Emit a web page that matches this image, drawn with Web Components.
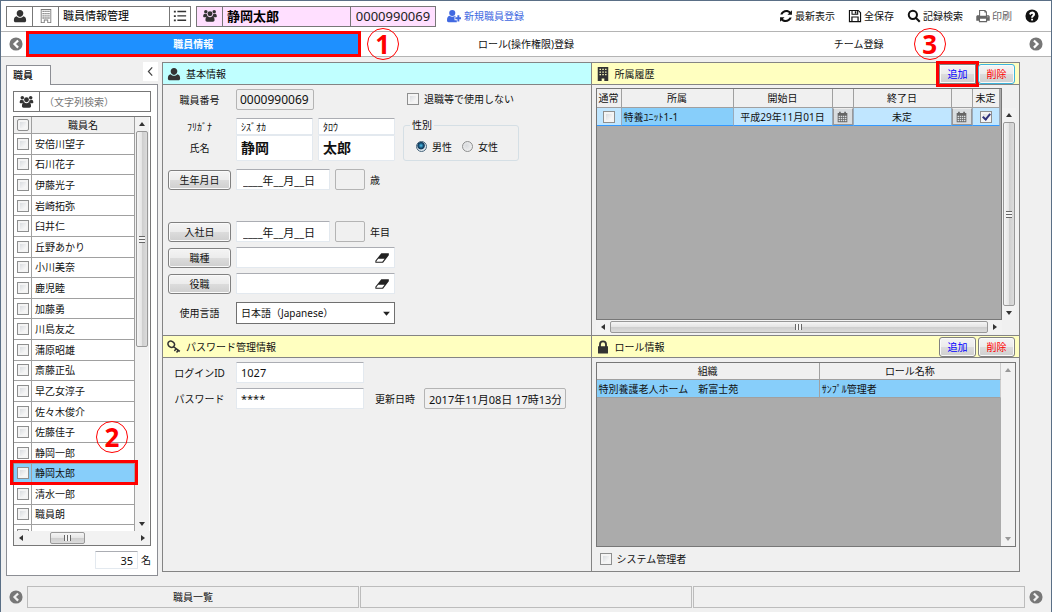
<!DOCTYPE html>
<html lang="ja">
<head>
<meta charset="utf-8">
<title>職員情報管理</title>
<style>
html,body{margin:0;height:100%}
body{font:10px/16px "Noto Sans","Noto Sans CJK JP",sans-serif;color:#111;background:#f0f0f0}
</style>
</head>
<body>
<staff-app></staff-app>
<script>
const BASE = `
*{box-sizing:border-box}
button,input,select{font:inherit;color:inherit;margin:0}
button{cursor:pointer;padding:0}
.btn{height:20px;border:1px solid #808080;border-radius:3px;background:linear-gradient(#f4f4f4,#ececec 48%,#dcdcdc 52%,#cfcfcf);box-shadow:inset 0 0 0 1px #fafafa;line-height:16px;white-space:nowrap}
.field{height:21px;border:1px solid #e3e9ef;border-top-color:#abadb3;background:#fff;padding:0 4px;min-width:0;border-radius:1px;font-size:11px}
.field[readonly].flat{background:#f0f0f0;border:1px solid #b4b4b4;border-radius:2px}
input[type=checkbox]{appearance:none;width:12px;height:12px;flex:none;border:1px solid #8e8f8f;background:linear-gradient(135deg,#cfd3d8,#f6f6f6 70%);box-shadow:inset 0 0 0 2px #f4f4f4;display:inline-block;vertical-align:middle;position:relative}
input[type=checkbox]:checked::after{content:"";position:absolute;left:3px;top:0;width:3px;height:6px;border:solid #31347c;border-width:0 2px 2px 0;transform:rotate(40deg)}
input[type=radio]{appearance:none;width:11px;height:11px;flex:none;border:1px solid #8e8f8f;border-radius:50%;background:radial-gradient(circle at 40% 40%,#d8dadd,#f6f6f6)}
input[type=radio]:checked{border-color:#45637a;background:radial-gradient(circle at 45% 40%,#4fc3ee 0,#12486e 35%,#12395a 45%,#dfe8ee 58%)}
table{border-spacing:0;table-layout:fixed;width:100%}
th,td{padding:0;font-weight:400;overflow:hidden;white-space:nowrap;border-right:1px solid #a0a0a0;border-bottom:1px solid #a0a0a0}
th{background:#f0f0f0;text-align:center}
`;
function define(name, css, html, setup){
  const t = document.createElement('template');
  t.innerHTML = `<style>${BASE}${css}</style>${html}`;
  customElements.define(name, class extends HTMLElement{
    constructor(){
      super();
      this.attachShadow({mode:'open'}).append(t.content.cloneNode(true));
    }
    connectedCallback(){ if(setup) setup(this, this.shadowRoot); }
  });
}

const ICONS = {
  user:'<path d="M8 1c2.300 0 3.800 1.700 3.800 3.900S10.300 9 8 9 4.200 7.200 4.200 4.900 5.700 1 8 1zM4.300 8.300C5.300 9.500 6.600 10 8 10s2.700-.5 3.700-1.700c2.300.4 3.300 2.200 3.300 4.700 0 1.300-.8 2-2 2H3c-1.200 0-2-.7-2-2 0-2.500 1-4.300 3.300-4.700z"/>',
  users:'<circle cx="3.200" cy="3.200" r="2"/><circle cx="12.800" cy="3.200" r="2"/><circle cx="8" cy="5.400" r="2.800"/><path d="M.2 8.700c0-2 .6-3.300 2-3.300.7.500 1.400.6 2.200.4.100 1.100.4 1.900 1 2.500-.9.100-1.600.5-2 1.200H1c-.5 0-.8-.3-.8-.8zM15.800 8.700c0-2-.6-3.300-2-3.300-.7.500-1.400.6-2.200.4-.1 1.100-.4 1.900-1 2.500.9.100 1.600.5 2 1.200H15c.5 0 .8-.3.8-.8zM5.500 8.300C7 9.700 9 9.700 10.500 8.300c1.800.2 2.700 1.900 2.700 4.300 0 1.200-.7 1.900-1.800 1.900H4.600c-1.100 0-1.800-.7-1.800-1.900 0-2.400.9-4.100 2.700-4.300z"/>',
  building:'<path fill-rule="evenodd" d="M2 0h12v16H9.500v-3h-3v3H2zM3 1v14h2.500v-3h5v3H13V1z"/><path d="M4 2h1.500v1.500H4zM6.200 2h1.500v1.500H6.200zM8.400 2h1.500v1.500H8.400zM10.600 2h1.500v1.500h-1.500zM4 4.500h1.500V6H4zM6.200 4.500h1.500V6H6.200zM8.400 4.500h1.500V6H8.400zM10.600 4.500h1.500V6h-1.500zM4 7h1.500v1.500H4zM6.200 7h1.500v1.500H6.200zM8.400 7h1.500v1.500H8.400zM10.600 7h1.500v1.500h-1.500zM4 9.500h1.500V11H4zM6.200 9.500h1.500V11H6.200zM8.400 9.500h1.500V11H8.400zM10.600 9.500h1.500V11h-1.500z"/>',
  tower:'<path fill-rule="evenodd" d="M2 0h12v16H9.500v-3h-3v3H2zM4 2v1.500h1.700V2zM7.200 2v1.500h1.700V2zM10.400 2v1.500H12V2zM4 5v1.500h1.700V5zM7.200 5v1.500h1.700V5zM10.400 5v1.500H12V5zM4 8v1.500h1.700V8zM7.200 8v1.500h1.700V8zM10.400 8v1.500H12V8z"/>',
  list:'<path d="M1 2h2.200v2H1zM5 2h10v1.700H5zM1 7h2.200v2H1zM5 7h10v1.700H5zM1 12h2.200v2H1zM5 12h10v1.700H5z"/>',
  adduser:'<circle cx="6" cy="4.500" r="3.500"/><path d="M3 7.800c2 1.500 4 1.500 6 0 .5 0 1 .3 1.400.7H8.600v4.300h2.600V15H1.800C.7 15 0 14.300 0 13.100 0 10.200.8 8 3 7.800z"/><path d="M11.900 7h2.200v2.500H16v2.200h-1.900V14.200h-2.200v-2.500H9.500V9.500h2.400z"/>',
  refresh:'<path d="M14.800 1.500v5H9.700l1.900-1.900C9 2.200 5.200 3.400 4 6.200H1.500C3 1.200 9.400-.6 13.200 3zM1.200 14.500v-5h5.100l-1.900 1.900c2.600 2.400 6.400 1.200 7.600-1.600h2.500C13 14.800 6.600 16.600 2.800 13z"/>',
  save:'<path fill-rule="evenodd" d="M1 1h11l3 3v11H1zM2.300 2.300v11.400h1.500V8.500h8.400v5.200h1.500V4.600l-2-2.300v4.200H4V2.300zM5.200 2.300v3h5.200v-3zM5.200 9.800v3.900h5.600V9.800zM7.800 2.600h1.700V5H7.800z"/>',
  search:'<circle cx="6.700" cy="6.700" r="4.700" fill="none" stroke="currentColor" stroke-width="2.300"/><path d="M9.400 11l1.700-1.700 4.300 4.400-1.700 1.700z"/>',
  print:'<path fill-rule="evenodd" d="M3.500 1h7l2 2v4H14c1 0 1.700.7 1.700 1.700v4.600h-3V15H3.300v-1.700h-3V8.700C.3 7.700 1 7 2 7h1.500zM4.700 2.200v5.600h6.600V4H9.600V2.200zM4.600 11.200v2.600h6.800v-2.600zM13 8.500v1h1v-1z"/>',
  help:'<path fill-rule="evenodd" d="M8 .5a7.500 7.500 0 110 15 7.500 7.500 0 010-15zM7 11v2h2.200v-2zM4.700 5.600l1.700 1.200C7.300 5 9 5.200 9 6.300c0 1-2.100 1.300-2 3.700h2.100c.1-1.500 2.400-1.700 2.400-4C11.500 2.300 6.400 1.700 4.700 5.600z"/>',
  left:'<path fill-rule="evenodd" d="M8 .5a7.500 7.500 0 110 15 7.500 7.500 0 010-15zM9.500 3L4.500 8l5 5 1.800-1.800L8 8l3.300-3.200z"/>',
  right:'<path fill-rule="evenodd" d="M8 .5a7.500 7.500 0 110 15 7.500 7.500 0 010-15zM6.500 3L4.700 4.800 8 8l-3.300 3.200L6.500 13l5-5z"/>',
  key:'<ellipse cx="4.800" cy="4.800" rx="3.900" ry="3.300" transform="rotate(35 4.800 4.800)" fill="none" stroke="currentColor" stroke-width="1.700"/><path d="M7.300 6.600l7.900 5.800-1.300 1.500-1-.8-1.300 1.700-1.400-1 1.300-1.800-1-.8-1.400 1.800-1.300-1 1.500-1.900-3-2.200z"/>',
  lock:'<path fill-rule="evenodd" d="M3.500 7V5a4.500 4.500 0 019 0v2h1.200v8.500H2.300V7zM5.600 7h4.800V5a2.400 2.400 0 00-4.800 0z"/>',
  cal:'<path fill-rule="evenodd" d="M1 2h2V.5h2.500V2h5V.500H13V2h2v13.500H1zM2.300 6v2H4.500V6zM5.500 6v2h2V6zM8.500 6v2h2V6zM11.500 6v2h2.200V6zM2.300 9v2H4.500V9zM5.500 9v2h2V9zM8.500 9v2h2V9zM11.500 9v2h2.200V9zM2.300 12v2H4.500v-2zM5.500 12v2h2v-2zM8.500 12v2h2v-2zM11.500 12v2h2.200v-2z"/>',
  eraser:'<path fill-rule="evenodd" d="M7.200 2.500h8.600v2.300l-6.600 8.700H.4v-2.400zM2.100 10.900l-.7 1.500h6.900l2.700-3.600H3.700z"/>',
  back:'<path d="M10.500 2L5 8l5.500 6" fill="none" stroke="currentColor" stroke-width="1.800"/>',
  down:'<path d="M2 5h12l-6 7z"/>'
};
define('ui-icon', `:host{display:inline-block;width:14px;height:14px;flex:none}svg{display:block;width:100%;height:100%}`,
  `<svg viewBox="0 0 16 16" fill="currentColor" aria-hidden="true"></svg>`,
  (h,r)=>{ r.querySelector('svg').innerHTML = ICONS[h.getAttribute('name')] || ''; });

define('step-mark', `:host{position:absolute;z-index:3;display:grid;place-items:center;width:32px;height:32px;border:1px solid red;border-radius:50%;color:red;font:700 26px/30px "Noto Sans",sans-serif}`, `<slot></slot>`);

define('scroll-bar', `
:host{display:flex;flex-direction:column;align-items:center;background:#f2f2f2;width:14px;color:#333}
:host([horizontal]){flex-direction:row;width:auto;height:14px}
:host([off]){color:#999}
.cap{width:14px;height:14px;flex:none;display:grid;place-items:center}
.cap::before{content:"";border:3px solid transparent;border-top-width:0;border-bottom:4px solid currentColor}
.end::before{transform:rotate(180deg)}
:host([horizontal]) .start::before{transform:rotate(-90deg)}
:host([horizontal]) .end::before{transform:rotate(90deg)}
.track{flex:1;align-self:stretch;display:flex;flex-direction:inherit;min-height:0}
.thumb{flex:0 0 var(--thumb,100%);margin:0 1px;border:1px solid #989898;border-radius:2px;background:linear-gradient(90deg,#f5f5f5,#e6e6e6 45%,#cfcfcf 55%,#dcdcdc);display:grid;place-items:center}
:host([horizontal]) .thumb{margin:1px 0 1px var(--start,0px);background:linear-gradient(#f5f5f5,#e6e6e6 45%,#cfcfcf 55%,#dcdcdc)}
.thumb::before{content:"";width:6px;height:7px;background:repeating-linear-gradient(#666 0 1px,#f5f5f5 1px 3px)}
:host([horizontal]) .thumb::before{width:7px;height:6px;background:repeating-linear-gradient(90deg,#666 0 1px,#f5f5f5 1px 3px)}
:host([off]) .thumb{display:none}
`, `<div class="cap start"></div><div class="track"><div class="thumb"></div></div><div class="cap end"></div>`);

define('top-bar', `
:host{display:flex;align-items:center;height:30px;padding:0 12px 0 5px;background:#fff;white-space:nowrap}
.group{display:flex;height:21px;border:1px solid #777;margin-right:5px}
.group>*{display:flex;align-items:center;justify-content:center;border:0;border-right:1px solid #777;background:none;color:#333}
.group>:last-child{border-right:0}
.sq{width:26px}.list{width:20px}
.title{width:111px;font-size:11px;justify-content:flex-start;padding-left:4px;color:#000}
.pink{background:#ffdfff}
.name{width:128px;font-size:13px;font-weight:700;justify-content:flex-start;padding-left:4px;color:#000}
.num{width:84px;font-size:13px;color:#222}
a{display:flex;align-items:center;color:#111;text-decoration:none;gap:2px;margin-left:13px}
a.new{color:#4169e1;margin-left:5px}
a.dim{color:#666}
.space{flex:1}
`, `
<div class="group"><button class="sq" aria-label="利用者"><ui-icon name="user"></ui-icon></button><button class="sq" aria-label="施設" style="color:#777"><ui-icon name="building"></ui-icon></button><span class="title">職員情報管理</span><button class="list" aria-label="一覧"><ui-icon name="list"></ui-icon></button></div>
<div class="group pink"><button class="sq" aria-label="職員"><ui-icon name="users"></ui-icon></button><span class="name">静岡太郎</span><span class="num">0000990069</span></div>
<a class="new" href="#new"><ui-icon name="adduser" style="width:16px"></ui-icon>新規職員登録</a>
<span class="space"></span>
<a href="#reload"><ui-icon name="refresh"></ui-icon>最新表示</a>
<a href="#save"><ui-icon name="save"></ui-icon>全保存</a>
<a href="#search"><ui-icon name="search"></ui-icon>記録検索</a>
<a href="#print" class="dim"><ui-icon name="print"></ui-icon>印刷</a>
<a href="#help" aria-label="ヘルプ"><ui-icon name="help"></ui-icon></a>
`);

const ARROWS = `
.arrow{width:26px;border:0;background:none;display:grid;place-items:center end;padding-right:4px;color:#777;flex:none}
.arrow:last-child{place-items:center start;padding:0 0 0 4px}
nav{flex:1;display:grid;grid-template-columns:repeat(3,1fr)}
`;
define('tab-strip', ARROWS + `
:host{display:flex;align-items:stretch;height:26px;border:solid #b4b4b4;border-width:1px 0;background:#fff}
.tab{position:relative;border:0;background:none}
.on{background:#1e90ff;color:#fff;font-weight:700;outline:3px solid red;outline-offset:-2px}
.one{left:calc(100% + 7px);top:-4px}
.three{left:calc(50% + 55px);top:-4px}
`, `<button class="arrow" aria-label="前へ"><ui-icon name="left"></ui-icon></button>
<nav><button class="tab on">職員情報<step-mark class="one">1</step-mark></button><button class="tab">ロール(操作権限)登録</button><button class="tab">チーム登録<step-mark class="three">3</step-mark></button></nav>
<button class="arrow" aria-label="次へ"><ui-icon name="right"></ui-icon></button>`);

define('foot-strip', ARROWS + `
:host{display:flex;align-items:stretch;height:22px;margin-bottom:5px}
nav{gap:1px}
nav button{border:1px solid #bcbcbc;background:#f0f0f0}
`, `<button class="arrow" aria-label="前へ"><ui-icon name="left"></ui-icon></button>
<nav><button>職員一覧</button><button aria-label="空き"></button><button aria-label="空き"></button></nav>
<button class="arrow" aria-label="次へ"><ui-icon name="right"></ui-icon></button>`);

define('staff-list', `
:host{display:flex;flex-direction:column;position:relative;width:152px;flex:none}
.tabs{display:flex;justify-content:space-between;height:22px;align-items:flex-end}
.tabs b{font-weight:500;height:20px;width:45px;border:1px solid #8c8e94;border-bottom:0;background:#fff;padding:1px 6px;position:relative;z-index:1;margin-bottom:-1px}
.fold{align-self:flex-start;width:15px;height:19px;border:0;background:#fff;display:grid;place-items:center;color:#444}
.body{flex:1;min-height:0;border:1px solid #8c8e94;background:#fff;padding:6px;display:flex;flex-direction:column}
.find{display:flex;height:21px;border:1px solid #777;flex:none;margin-bottom:4px}
.find span{width:26px;display:grid;place-items:center;border-right:1px solid #777;color:#333}
.find input{flex:1;min-width:0;border:0;background:none;padding:0 4px;outline:0}
.find input::placeholder{color:#777}
.frame{flex:1;min-height:0;border:1px solid #777;display:grid;grid-template:minmax(0,1fr) 14px/minmax(0,1fr) 15px}
.rows{overflow:hidden;min-height:0;contain:size}
table{height:429px}
col.c{width:18px}
th{height:17px}td{height:20px;padding-left:3px}
th:first-child,td:first-child{text-align:center;padding:0;line-height:0}
.all{height:14px;width:14px;border-radius:2px}
.hit td{background:#87cefa}
scroll-bar[horizontal]{grid-column:1/3}
.count{display:flex;justify-content:flex-end;align-items:center;gap:3px;margin-top:5px}
.count input{width:43px;height:18px;text-align:right}
.ring{position:absolute;left:4px;top:398px;width:128px;height:25px;border:3px solid red;z-index:2;pointer-events:none}
step-mark{left:90px;top:359px}
`, `
<div class="tabs"><b>職員</b><button class="fold" aria-label="たたむ"><ui-icon name="back" style="width:11px;height:11px"></ui-icon></button></div>
<div class="body">
<label class="find"><span><ui-icon name="users" style="width:15px"></ui-icon></span><input type="text" placeholder="（文字列検索）" aria-label="文字列検索"></label>
<div class="frame"><div class="rows"><table><colgroup><col class="c"><col></colgroup><thead><tr><th><input class="all" type="checkbox" aria-label="すべて選択"></th><th>職員名</th></tr></thead><tbody></tbody></table></div>
<scroll-bar style="--thumb:56%"></scroll-bar><scroll-bar horizontal style="--thumb:35px;--start:22px"></scroll-bar></div>
<label class="count"><input class="field" type="text" value="35" readonly>名</label>
</div><div class="ring"></div><step-mark>2</step-mark>`,
(h,r)=>{
  const names='安倍川望子 石川花子 伊藤光子 岩崎拓弥 臼井仁 丘野あかり 小川美奈 鹿児睦 加藤勇 川島友之 蒲原昭雄 斎藤正弘 早乙女淳子 佐々木俊介 佐藤佳子 静岡一郎 静岡太郎 清水一郎 職員朗'.split(' ');
  r.querySelector('tbody').innerHTML = names.concat('').map(n=>
    `<tr${n==='静岡太郎'?' class="hit"':''}><td><input type="checkbox" aria-label="${n||'次の行'}"></td><td>${n}</td></tr>`).join('');
});

define('info-panel', `
:host{display:flex;flex-direction:column;min-width:0;min-height:0;border:solid #848484;border-width:0 1px 1px 0}
header{display:flex;align-items:center;height:22px;flex:none;background:#ffffc0;border-bottom:1px solid #848484;padding:0 4px;color:#222}
:host([tone=cyan]) header{background:#c0ffff}
h2{font:inherit;margin:0 0 0 5px;flex:1;color:#111}
.body{flex:1;min-height:0;display:flex;flex-direction:column}
header ui-icon{color:#333}
`, `<header><ui-icon></ui-icon><h2></h2><slot name="tools"></slot></header><div class="body"><slot></slot></div>`,
(h,r)=>{ const i=r.querySelector('ui-icon'); i.setAttribute('name',h.getAttribute('icon')); i.connectedCallback(); r.querySelector('h2').textContent=h.getAttribute('heading'); });

define('edit-tools', `
:host{display:flex;gap:2px}
.btn{width:37px}
.add{color:#00f}.del{color:#f00}
:host([guided]) .add{outline:3px solid red;border-radius:0}
:host([guided]) .del{border-color:#3cb4dc}
`, `<button class="btn add">追加</button><button class="btn del">削除</button>`);

define('basic-form', `
:host{display:flex;padding:4px 5px;gap:8px}
form{display:flex;flex-direction:column;width:227px;flex:none}
.row{display:grid;grid-template-columns:63px minmax(0,1fr);column-gap:5px;align-items:center;min-height:21px;margin-bottom:5px}
.wide{margin-bottom:8px}.far{margin-bottom:31px}
.row>label,.caps{text-align:center}
.cells{display:flex;gap:5px;align-items:center;position:relative}
.cells .field{flex:1}
.caps{display:grid;grid-template-rows:17px 26px;align-items:center}
.pair{display:grid;grid-template:17px 26px/1fr 1fr;column-gap:5px}
.pair .field{height:auto;font-size:10px}
.pair .big{font-size:14px;font-weight:700;border-top-color:#e3e9ef}
.num.field{font-size:12px;flex:0 0 78px;padding:0 3px}
.cells .date{flex:0 0 94px;padding:0 6px}
.cells .age{flex:0 0 30px}
.tail{white-space:nowrap;width:24px}
.cells ui-icon,.cells .arrow{position:absolute;right:6px;pointer-events:none;color:#222}
select{appearance:none;width:100%;height:22px;border:1px solid #707070;background:#fff;padding:0 4px;border-radius:0}
.side{padding-top:2px}
.side label{display:flex;align-items:center;gap:5px;white-space:nowrap}
.side>label{padding-left:4px}
fieldset{margin:10px 0 0;width:116px;height:44px;border:1px solid #d5dfe5;border-radius:3px;padding:3px 12px;display:flex;gap:10px}
legend{padding:0 2px;margin-left:-6px}
`, `
<form>
<div class="row wide"><label for="no">職員番号</label><div class="cells"><input id="no" class="field flat num" value="0000990069" readonly></div></div>
<div class="row wide"><div class="caps"><label for="k1">ﾌﾘｶﾞﾅ</label><label for="n1">氏名</label></div><div class="pair"><input id="k1" class="field" value="ｼｽﾞｵｶ"><input class="field" value="ﾀﾛｳ" aria-label="ﾌﾘｶﾞﾅ 名"><input id="n1" class="field big" value="静岡"><input class="field big" value="太郎" aria-label="名"></div></div>
<div class="row far"><button type="button" class="btn">生年月日</button><div class="cells"><input class="field date" value="____年__月__日" aria-label="生年月日"><input class="field flat age" readonly aria-label="年齢"><span class="tail">歳</span></div></div>
<div class="row"><button type="button" class="btn">入社日</button><div class="cells"><input class="field date" value="____年__月__日" aria-label="入社日"><input class="field flat age" readonly aria-label="年数"><span class="tail">年目</span></div></div>
<div class="row"><button type="button" class="btn">職種</button><div class="cells"><input class="field" aria-label="職種"><ui-icon name="eraser"></ui-icon></div></div>
<div class="row wide"><button type="button" class="btn">役職</button><div class="cells"><input class="field" aria-label="役職"><ui-icon name="eraser"></ui-icon></div></div>
<div class="row"><label for="lang">使用言語</label><div class="cells"><select id="lang"><option>日本語（Japanese）</option></select><ui-icon name="down" style="width:9px;height:9px;right:4px"></ui-icon></div></div>
</form>
<div class="side"><label><input type="checkbox">退職等で使用しない</label>
<fieldset><legend>性別</legend><label><input type="radio" name="sex" checked>男性</label><label><input type="radio" name="sex">女性</label></fieldset></div>`);

define('login-form', `
:host{display:grid;grid-template-columns:63px 128px auto 142px;justify-content:start;align-items:center;gap:5px;padding:4px 5px}
label{text-align:center;white-space:nowrap}
.when{grid-area:2/3;padding:0 4px 0 6px}
#pw,label[for=pw]{grid-row:2}
`, `<label for="id">ログインID</label><input id="id" class="field" value="1027">
<label for="pw">パスワード</label><input id="pw" class="field" value="****">
<label for="at" class="when">更新日時</label><input id="at" class="field flat" style="grid-area:2/4" value="2017年11月08日 17時13分" readonly>`);

define('history-table', `
:host{flex:1;display:grid;grid-template:minmax(0,1fr) 14px/minmax(0,1fr) 14px;margin:3px 3px 1px 4px}
.area{background:#ababab;border:1px solid #777;padding-right:3px}
scroll-bar.v{margin-top:20px}
th{height:19px}td{height:18px;background:#c0e6ff;border-color:#3399ff #9ab;border-bottom-color:#3399ff;text-align:center;padding:0}
.unit{background:#87cefa;text-align:left;padding-left:2px}
td:first-child,td.b,td:last-child{line-height:0}
td.b button{width:100%;height:17px;border:1px solid #999;border-top-color:#eee;background:#d9dde0;display:grid;place-items:center;color:#666}
`, `<div class="area"><table><colgroup><col style="width:25px"><col style="width:112px"><col style="width:99px"><col style="width:21px"><col style="width:98px"><col style="width:21px"><col style="width:27px"></colgroup>
<thead><tr><th>通常</th><th>所属</th><th>開始日</th><th></th><th>終了日</th><th></th><th>未定</th></tr></thead>
<tbody><tr><td><input type="checkbox" aria-label="通常"></td><td class="unit">特養ﾕﾆｯﾄ1-1</td><td>平成29年11月01日</td><td class="b"><button aria-label="開始日を選ぶ"><ui-icon name="cal" style="width:11px;height:12px"></ui-icon></button></td><td>未定</td><td class="b"><button aria-label="終了日を選ぶ"><ui-icon name="cal" style="width:11px;height:12px"></ui-icon></button></td><td><input type="checkbox" checked aria-label="未定"></td></tr></tbody></table></div>
<scroll-bar class="v"></scroll-bar><scroll-bar horizontal></scroll-bar>`);

define('role-table', `
:host{flex:1;display:flex;flex-direction:column;padding:4px 3px 0 4px}
.frame{flex:1;display:flex;border:1px solid #777}
.area{flex:1;background:#ababab}
th{height:17px}td{height:18px;background:#87cefa;padding-left:2px}
label{display:flex;align-items:center;gap:5px;height:24px;padding-left:4px}
th:last-child,td:last-child{border-right-color:#ccc}
`, `<div class="frame"><div class="area"><table><colgroup><col style="width:223px"><col style="width:181px"></colgroup><thead><tr><th>組織</th><th>ロール名称</th></tr></thead><tbody><tr><td>特別養護老人ホーム　新富士苑</td><td>ｻﾝﾌﾟﾙ管理者</td></tr></tbody></table></div><scroll-bar off></scroll-bar></div>
<label><input type="checkbox">システム管理者</label>`);

define('staff-app', `
:host{display:flex;flex-direction:column;min-height:100vh;border:1px solid #5a6f86;background:#f0f0f0}
main{flex:1;display:flex;gap:4px;padding:5px 31px 10px 5px}
.grid{flex:1;min-width:0;display:grid;grid-template-columns:minmax(0,1fr) minmax(0,1fr);grid-template-rows:273px minmax(0,1fr);border:solid #848484;border-width:1px 0 0 1px;margin-bottom:4px}
`, `
<top-bar></top-bar><tab-strip></tab-strip>
<main><staff-list></staff-list>
<div class="grid">
<info-panel tone="cyan" icon="user" heading="基本情報"><basic-form></basic-form></info-panel>
<info-panel icon="tower" heading="所属履歴"><edit-tools slot="tools" guided></edit-tools><history-table></history-table></info-panel>
<info-panel icon="key" heading="パスワード管理情報"><login-form></login-form></info-panel>
<info-panel icon="lock" heading="ロール情報"><edit-tools slot="tools"></edit-tools><role-table></role-table></info-panel>
</div></main>
<foot-strip></foot-strip>`);
</script>
</body>
</html>
